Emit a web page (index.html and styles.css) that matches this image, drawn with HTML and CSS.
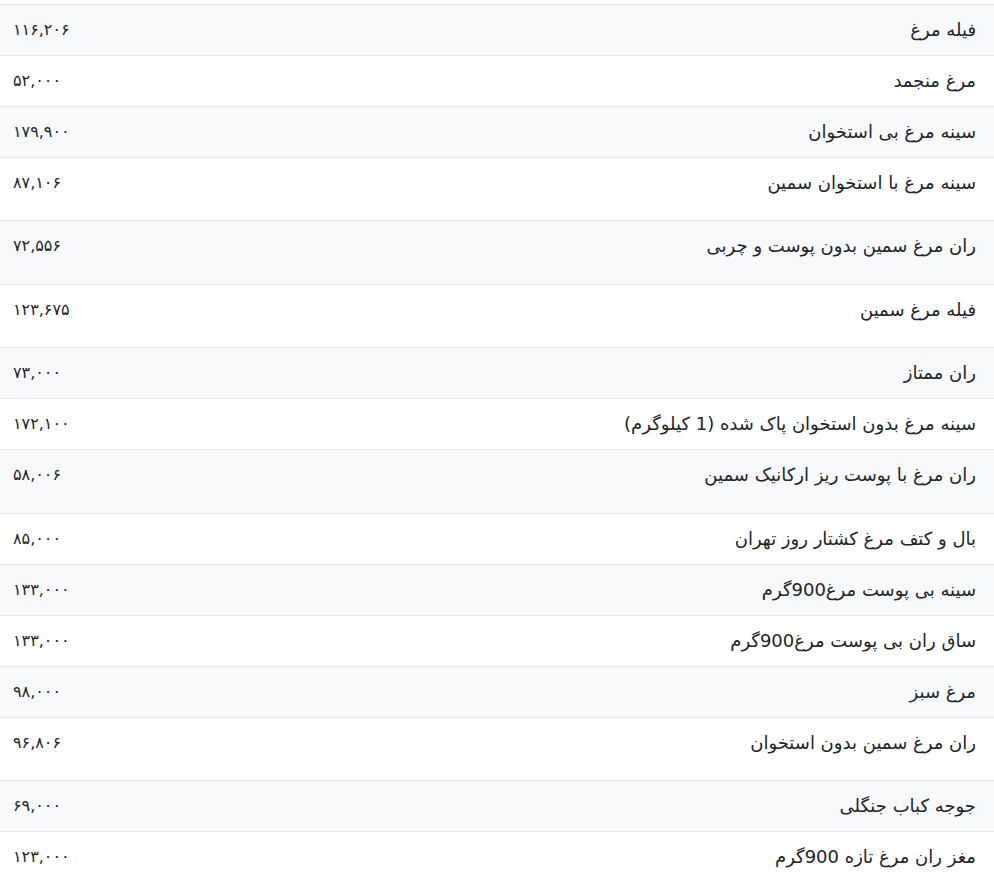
FILE: index.html
```html
<!DOCTYPE html>
<html lang="fa" dir="rtl">
<head>
<meta charset="utf-8">
<title>قیمت مرغ</title>
<link rel="stylesheet" href="styles.css">
</head>
<body>
<table class="price-table">
<tbody>
<tr class="row"><td class="name">فیله مرغ</td><td class="price">۱۱۶,۲۰۶</td></tr>
<tr class="row"><td class="name">مرغ منجمد</td><td class="price">۵۲,۰۰۰</td></tr>
<tr class="row"><td class="name">سینه مرغ بی استخوان</td><td class="price">۱۷۹,۹۰۰</td></tr>
<tr class="row tall"><td class="name">سینه مرغ با استخوان سمین</td><td class="price">۸۷,۱۰۶</td></tr>
<tr class="row tall"><td class="name">ران مرغ سمین بدون پوست و چربی</td><td class="price">۷۲,۵۵۶</td></tr>
<tr class="row tall"><td class="name">فیله مرغ سمین</td><td class="price">۱۲۳,۶۷۵</td></tr>
<tr class="row"><td class="name">ران ممتاز</td><td class="price">۷۳,۰۰۰</td></tr>
<tr class="row"><td class="name">سینه مرغ بدون استخوان پاک شده (1 کیلوگرم)</td><td class="price">۱۷۲,۱۰۰</td></tr>
<tr class="row tall"><td class="name">ران مرغ با پوست ریز ارکانیک سمین</td><td class="price">۵۸,۰۰۶</td></tr>
<tr class="row"><td class="name">بال و کتف مرغ کشتار روز تهران</td><td class="price">۸۵,۰۰۰</td></tr>
<tr class="row"><td class="name">سینه بی پوست مرغ900گرم</td><td class="price">۱۳۳,۰۰۰</td></tr>
<tr class="row"><td class="name">ساق ران بی پوست مرغ900گرم</td><td class="price">۱۳۳,۰۰۰</td></tr>
<tr class="row"><td class="name">مرغ سبز</td><td class="price">۹۸,۰۰۰</td></tr>
<tr class="row tall"><td class="name">ران مرغ سمین بدون استخوان</td><td class="price">۹۶,۸۰۶</td></tr>
<tr class="row"><td class="name">جوجه کباب جنگلی</td><td class="price">۶۹,۰۰۰</td></tr>
<tr class="row"><td class="name">مغز ران مرغ تازه 900گرم</td><td class="price">۱۲۳,۰۰۰</td></tr>
</tbody>
</table>
</body>
</html>
```
FILE: styles.css
```css
html, body {
  margin: 0;
  padding: 0;
  background: #ffffff;
}
body {
  font-family: "DejaVu Sans", sans-serif;
  font-size: 16px;
  color: #212529;
}
.price-table {
  width: 100%;
  border-collapse: collapse;
  margin-top: 3.6px;
}
.row td {
  border-top: 1px solid #e3e6ea;
  padding: 12px 18px 12px 13px;
  height: 26px;
  line-height: 26px;
  vertical-align: top;
}
.row:nth-child(odd) td {
  background: #f8f9fa;
}
.row.tall td {
  padding-bottom: 24.5px;
}
.name {
  text-align: right;
  font-size: 18px;
}
.price {
  text-align: left;
  width: 120px;
  font-size: 16px;
  letter-spacing: -1px;
}
```
